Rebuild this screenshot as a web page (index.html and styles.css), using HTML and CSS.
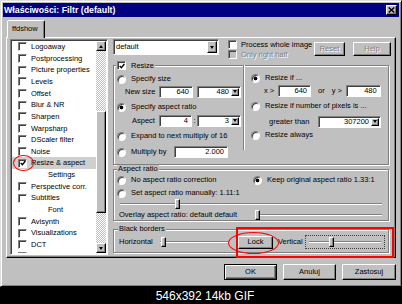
FILE: index.html
```html
<!DOCTYPE html>
<html lang="pl">
<head>
<meta charset="utf-8">
<title>Właściwości: Filtr (default)</title>
<link rel="stylesheet" href="styles.css">
</head>
<body>
<div class="page">
  <div class="window">
    <div class="titlebar">
      <span class="title">Właściwości: Filtr (default)</span>
      <span class="close btn"><svg width="7" height="6" viewBox="0 0 7 6"><path d="M0.7 0.5 L6.3 5.5 M6.3 0.5 L0.7 5.5" stroke="#000" stroke-width="1.5" fill="none"/></svg></span>
    </div>
    <div class="tabs"><div class="tab">ffdshow</div></div>
    <div class="panel">
      <div class="listbox field">
        <ul class="items">
          <li><span class="cb field"></span>Logoaway</li>
          <li><span class="cb field"></span>Postprocessing</li>
          <li><span class="cb field"></span>Picture properties</li>
          <li><span class="cb field"></span>Levels</li>
          <li><span class="cb field"></span>Offset</li>
          <li><span class="cb field"></span>Blur &amp; NR</li>
          <li><span class="cb field"></span>Sharpen</li>
          <li><span class="cb field"></span>Warpsharp</li>
          <li><span class="cb field"></span>DScaler filter</li>
          <li><span class="cb field"></span>Noise</li>
          <li class="sel"><span class="cb field"><svg width="6" height="6" viewBox="0 0 7 7"><path d="M0.8 3.4 L2.8 5.6 L6.3 1.2" fill="none" stroke="#000" stroke-width="1.6"/></svg></span>Resize &amp; aspect</li>
          <li class="sub">Settings</li>
          <li><span class="cb field"></span>Perspective corr.</li>
          <li><span class="cb field"></span>Subtitles</li>
          <li class="sub">Font</li>
          <li><span class="cb field"></span>Avisynth</li>
          <li><span class="cb field"></span>Visualizations</li>
          <li><span class="cb field"></span>DCT</li>
          <li><span class="cb field"></span></li>
        </ul>
        <div class="vscroll">
          <div class="sbtn btn"><span class="tri-up"></span></div>
          <div class="strack"><div class="thumb btn" style="margin-top:60px"></div></div>
          <div class="sbtn btn"><span class="tri-down"></span></div>
        </div>
      </div>

      <div class="right">
        <div class="toprow">
          <div class="combo combo-main field"><span class="cval left">default</span><span class="dd btn"><span class="tri-down"></span></span></div>
          <div class="checks">
            <div class="chk"><span class="cb field"></span>Process whole image</div>
            <div class="chk disabled"><span class="cb field off"></span>Only right half</div>
          </div>
          <div class="topbtns">
            <span class="btn pbtn reset disabled">Reset</span>
            <span class="btn pbtn help disabled">Help</span>
          </div>
        </div>

        <fieldset class="group g-resize">
          <legend><span class="chk lg"><span class="cb field"><svg width="6" height="6" viewBox="0 0 7 7"><path d="M0.8 3.4 L2.8 5.6 L6.3 1.2" fill="none" stroke="#000" stroke-width="1.6"/></svg></span>Resize</span></legend>
          <div class="cols">
            <div class="col-left">
              <div class="opt"><span class="rb field"></span>Specify size</div>
              <div class="frow h13 in-new">
                <span class="lbl w34">New size</span>
                <span class="num field w34">640</span>
                <span class="combo field sm w44 ml4"><span class="cval">480</span><span class="dd btn"><span class="tri-down"></span></span></span>
              </div>
              <div class="opt mt3"><span class="rb field on"></span>Specify aspect ratio</div>
              <div class="frow h13 mt1 in-aspect">
                <span class="lbl w27">Aspect</span>
                <span class="num field w33">4</span>
                <span class="colon">:</span>
                <span class="combo field sm w44"><span class="cval">3</span><span class="dd btn"><span class="tri-down"></span></span></span>
              </div>
              <div class="opt mt3"><span class="rb field"></span>Expand to next multiply of 16</div>
              <div class="opt mt4">
                <span class="rb field"></span>
                <span class="lbl w43">Multiply by</span>
                <span class="num field w54 nogap">2.000</span>
              </div>
            </div>
            <div class="col-right">
              <div class="opt"><span class="rb field on"></span>Resize if ...</div>
              <div class="frow mt1 in-xy">
                <span class="lbl w14">x &gt;</span>
                <span class="num field w33">640</span>
                <span class="lbl or">or</span>
                <span class="lbl w14">y &gt;</span>
                <span class="num field w35">480</span>
              </div>
              <div class="opt mt3"><span class="rb field"></span>Resize if number of pixels is ...</div>
              <div class="frow h13 mt3 in-gt">
                <span class="lbl w49">greater than</span>
                <span class="combo field sm w63"><span class="cval">307200</span><span class="dd btn"><span class="tri-down"></span></span></span>
              </div>
              <div class="opt mt1"><span class="rb field"></span>Resize always</div>
            </div>
          </div>
        </fieldset>

        <fieldset class="group g-aspect">
          <legend class="txt">Aspect ratio</legend>
          <div class="arow mt1">
            <div class="opt w136"><span class="rb field"></span>No aspect ratio correction</div>
            <div class="opt"><span class="rb field on"></span>Keep original aspect ratio 1.33:1</div>
          </div>
          <div class="arow mt1">
            <div class="opt"><span class="rb field"></span>Set aspect ratio manually: 1.11:1</div>
          </div>
          <div class="slider s-full"><span class="track"></span><span class="knob btn" style="left:21%"></span></div>
          <div class="frow h10 mt1 in-overlay">
            <span class="lbl w136">Overlay aspect ratio: default default</span>
            <div class="slider s-flex"><span class="track"></span><span class="knob btn" style="left:0%"></span></div>
          </div>
        </fieldset>

        <fieldset class="group g-black">
          <legend class="txt">Black borders</legend>
          <div class="frow h14 mt2 in-black">
            <span class="lbl w41">Horizontal</span>
            <div class="slider s-h"><span class="track"></span><span class="knob btn" style="left:1%"></span></div>
            <span class="btn lock">Lock</span>
            <span class="lbl vert">Vertical</span>
            <div class="focusbox"><div class="slider s-v"><span class="track"></span><span class="knob btn" style="left:28%"></span></div></div>
          </div>
        </fieldset>
      </div>
    </div>

    <div class="buttons">
      <span class="btn dbtn default">OK</span>
      <span class="btn dbtn">Anuluj</span>
      <span class="btn dbtn wide">Zastosuj</span>
    </div>
  </div>
  <div class="caption">546x392 14kb GIF</div>

  <span class="mark mark-cb"></span>
  <span class="mark mark-box"></span>
  <span class="mark mark-lock"></span>
</div>
</body>
</html>
```

FILE: styles.css
```css
* { box-sizing: border-box; margin: 0; padding: 0; }
html, body { width: 402px; height: 304px; overflow: hidden; background: #000; }
body { font-family: "Liberation Sans", Arial, sans-serif; font-size: 7.5px; line-height: 1; color: #000; }

.page { position: relative; display: flex; flex-direction: column; width: 402px; height: 304px; }

/* generic win98 bits */
.btn { background: #c0c0c0; border: 1px solid; border-color: #fff #000 #000 #fff; box-shadow: inset -1px -1px #808080; display: flex; align-items: center; justify-content: center; flex: none; }
.field { background: #fff; border: 1px solid; border-color: #808080 #fff #fff #808080; box-shadow: inset 1px 1px #404040; }
.disabled { color: #808080; text-shadow: 1px 1px 0 #fff; }

.tri-down { width: 0; height: 0; border-left: 2.5px solid transparent; border-right: 2.5px solid transparent; border-top: 3px solid #000; }
.tri-up { width: 0; height: 0; border-left: 2.5px solid transparent; border-right: 2.5px solid transparent; border-bottom: 3px solid #000; }

.cb { width: 9px; height: 9px; flex: none; display: flex; align-items: center; justify-content: center; }
.cb.off { background: #c0c0c0; }
.rb { width: 9px; height: 9px; flex: none; border-radius: 50%; }
.rb.on { background: radial-gradient(circle, #000 0 1.6px, #fff 2.2px); }

/* window */
.window { height: 287px; flex: none; display: flex; flex-direction: column; background: #c0c0c0; border: 1px solid; border-color: #dfdfdf #000 #000 #dfdfdf; box-shadow: inset 1px 1px #fff, inset -1px -1px #808080; padding: 2px; }

.titlebar { height: 14px; flex: none; background: #000080; display: flex; align-items: center; justify-content: space-between; padding: 0 2px 0 1px; }
.title { color: #fff; font-weight: bold; font-size: 8.8px; }
.close { width: 11px; height: 10px; }

.tabs { height: 20px; flex: none; display: flex; align-items: flex-end; padding-left: 4px; }
.tab { position: relative; z-index: 1; width: 38px; height: 18px; margin-bottom: -1px; background: #c0c0c0; border: 1px solid; border-bottom: none; border-color: #fff #000 transparent #fff; border-radius: 2px 2px 0 0; box-shadow: inset -1px 0 #808080; padding: 4px 0 0 4px; }

.panel { flex: none; height: 221px; margin: 0 3px; border: 1px solid; border-color: #fff #000 #000 #fff; box-shadow: inset -1px -1px #808080; padding: 1px 4px 2px 3px; display: flex; gap: 5px; }

/* list box */
.listbox { width: 98px; height: 216px; flex: none; display: flex; padding: 1px; }
.items { flex: 1; min-width: 0; list-style: none; overflow: hidden; }
.items li { height: 11.65px; display: flex; align-items: center; gap: 4px; padding-left: 6px; white-space: nowrap; }
.items li.sel { background: #cfcfcf; }
.items li.sub { padding-left: 36px; }
.vscroll { width: 10px; flex: none; display: flex; flex-direction: column; }
.sbtn { height: 10px; }
.strack { flex: 1; background: repeating-conic-gradient(#fff 0 25%, #c0c0c0 0 50%) 0 0 / 2px 2px; }
.thumb { height: 102px; }

/* right column */
.right { flex: 1; min-width: 0; display: flex; flex-direction: column; }
.toprow { height: 22px; flex: none; display: flex; align-items: flex-start; }
.combo { display: flex; padding: 1px; flex: none; }
.combo-main { width: 106px; height: 16px; }
.cval { flex: 1; display: flex; align-items: center; justify-content: flex-end; padding-right: 2px; }
.cval.left { justify-content: flex-start; padding-left: 1px; }
.dd { width: 10px; }
.combo.sm { height: 12px; }
.combo.sm .dd { width: 8px; }
.checks { margin-left: 9px; padding-top: 1px; display: flex; flex-direction: column; gap: 1px; }
.chk { display: flex; align-items: center; gap: 4px; height: 9px; white-space: nowrap; }
.topbtns { margin-left: auto; margin-top: 3px; display: flex; gap: 8px; }
.pbtn { height: 14px; }
.reset { width: 31px; }
.help { width: 38px; }

/* group boxes */
.group { flex: none; border: 1px solid #808080; box-shadow: 1px 1px 0 #fff, inset 1px 1px 0 #fff; margin-right: 2px; padding: 0; min-inline-size: 0; }
.group > legend { margin-left: 2px; padding: 0 1px; background: #c0c0c0; }
.group > legend.txt { height: 8px; line-height: 8px; margin-left: 3px; }
.g-black > legend.txt { margin-left: 4px; }
.chk.lg { gap: 5px; }
.g-aspect { margin-top: 0; }
.g-black { margin-top: 4px; padding-bottom: 3px; }

.cols { display: flex; }
.col-left { width: 129px; flex: none; padding: 3px 0 6px 3px; display: flex; flex-direction: column; }
.col-right { flex: 1; margin-top: -5px; height: 85px; border-left: 1px solid #808080; box-shadow: inset 1px 0 #fff; padding: 7px 0 0 7px; display: flex; flex-direction: column; }

.opt { display: flex; align-items: center; gap: 5px; height: 12px; white-space: nowrap; flex: none; }
.frow { display: flex; align-items: center; height: 12px; white-space: nowrap; flex: none; }
.h10 { height: 10px; }
.h13 { height: 13px; }
.h14 { height: 14px; }
.mt1 { margin-top: 1px; }
.mt2 { margin-top: 2px; }
.mt3 { margin-top: 3px; }
.mt4 { margin-top: 4px; }
.ml4 { margin-left: 4px; }

.lbl { flex: none; }
.num { height: 12px; flex: none; display: flex; align-items: center; justify-content: flex-end; padding-right: 3px; }
.colon { width: 5px; text-align: center; flex: none; }

.w14 { width: 14px; }
.w27 { width: 27px; }
.w33 { width: 33px; }
.w34 { width: 34px; }
.w35 { width: 35px; }
.w41 { width: 41px; }
.w43 { width: 43px; }
.w44 { width: 44px; }
.w49 { width: 49px; }
.w54 { width: 54px; }
.w63 { width: 63px; }
.w136 { width: 136px; flex: none; }
.nogap { margin-left: -5px; }

.in-new { padding-left: 8px; }
.in-aspect { padding-left: 15px; }
.in-xy { padding-left: 13px; }
.or { margin: 0 7px; }
.in-gt { padding-left: 18px; }

.arow { display: flex; height: 12px; padding-left: 3px; }
.in-overlay { padding-left: 5px; padding-right: 6px; }
.in-black { padding-left: 5px; }

/* sliders */
.slider { position: relative; height: 10px; display: flex; align-items: center; }
.slider .track { flex: 1; height: 2px; border-top: 1px solid #808080; border-bottom: 1px solid #fff; }
.slider .knob { position: absolute; top: 0; width: 5px; height: 10px; }
.s-full { margin: 0 6px; }
.s-flex { flex: 1; }
.s-h { width: 68px; flex: none; }
.lock { width: 35px; height: 13px; margin-left: 10px; }
.vert { margin-left: 5px; width: 27px; }
.focusbox { width: 80px; height: 14px; flex: none; border: 1px dotted #404040; padding: 1px 3px; display: flex; align-items: center; }
.s-v { flex: 1; }

/* dialog buttons */
.buttons { flex: none; display: flex; justify-content: flex-end; gap: 6px; margin-top: 6px; padding-right: 3px; }
.dbtn { width: 53px; height: 16px; }
.dbtn.wide { width: 54px; }
.dbtn.default { border-color: #000; box-shadow: inset 1px 1px #fff, inset -1px -1px #404040, inset -2px -2px #808080; }

.caption { flex: 1; display: flex; align-items: center; justify-content: center; padding-left: 8px; color: #fff; font-size: 12px; }

/* red annotations drawn over the screenshot */
.mark { position: absolute; border: 1.5px solid #f00; pointer-events: none; }
.mark-cb { left: 13px; top: 155px; width: 21px; height: 16px; border-radius: 50%; }
.mark-box { left: 236px; top: 227px; width: 158px; height: 31px; border-width: 2px; }
.mark-lock { left: 228px; top: 232px; width: 51px; height: 22px; border-radius: 50%; }
```
